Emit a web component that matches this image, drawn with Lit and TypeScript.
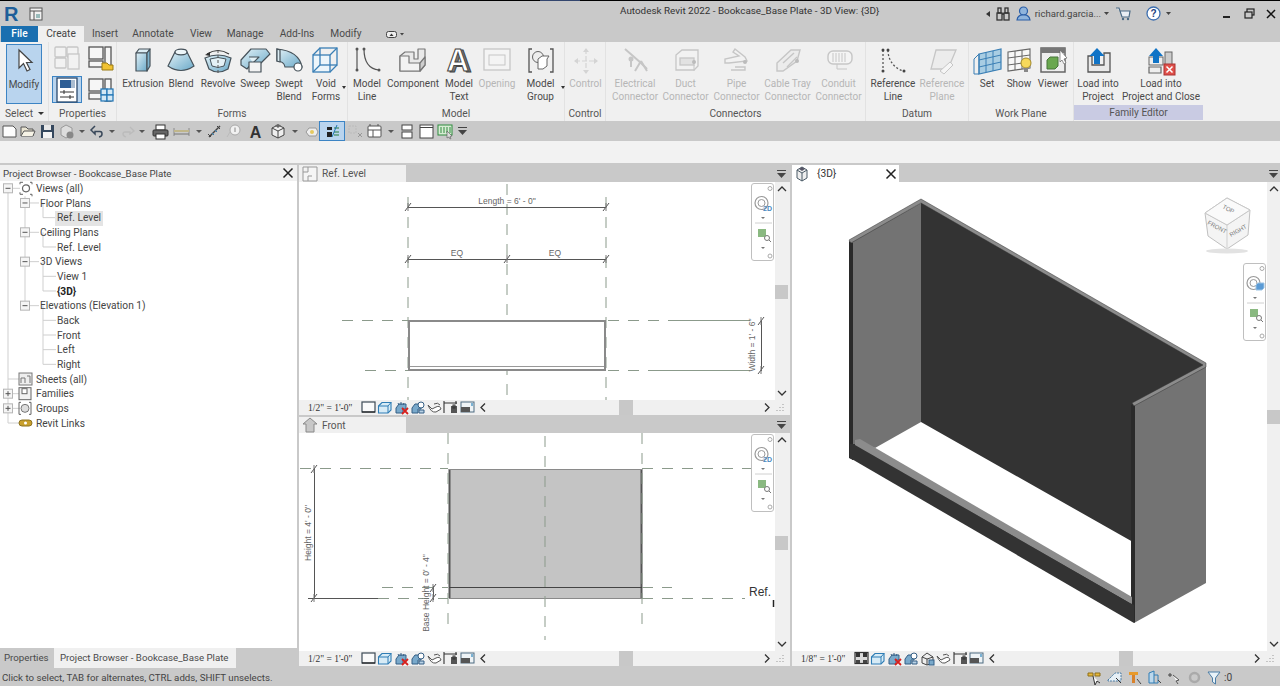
import { LitElement, html, svg, css } from "lit";
import { customElement } from "lit/decorators.js";

const SL = "#46525a";
const BL = "#3a7fb5";
const G = "#c6c6c6";
const ic = (f: unknown, w = 32, h = 29) => html`<svg class="ic" viewBox="0 0 ${w} ${h}" width=${w} height=${h}>${f}</svg>`;

const I: Record<string, unknown> = {
  extrusion: svg`<g stroke=${SL} stroke-width="1.2" stroke-linejoin="round"><path d="M9 6l3-4h11l-3 4z" fill="#dcedf4"/><rect x="9" y="6" width="11" height="18" fill="url(#bl)"/><path d="M20 6l3-4v17l-3 5z" fill="#7fb3cd"/></g>`,
  blend: svg`<g stroke=${SL} stroke-width="1.2"><path d="M10 5L3 19Q16 28 29 19L22 5z" fill="url(#bl)"/><ellipse cx="16" cy="5" rx="6" ry="2.8" fill="#eef6f9"/></g>`,
  revolve: svg`<path d="M5 7Q16 0 27 7" fill="none" stroke="#333" stroke-width="1.2"/><path d="M3 8l5-3v4z" fill="#333"/><path d="M3 11Q16 5 29 11L26 22Q16 28 7 22z" fill="url(#bl)" stroke=${SL} stroke-width="1.2"/><path d="M8 12Q16 9 24 12L22 19Q16 22 10 19z" fill="#e4f1f6" stroke=${SL}/><path d="M16 3V27" stroke="#555" stroke-dasharray="3 2"/>`,
  sweep: svg`<g stroke=${SL} stroke-width="1.2" stroke-linejoin="round"><path d="M2 13L12 2H27L31 7L22 16H13L8 22L2 18z" fill="url(#bl)"/><path d="M10 10H20L14 16" fill="#e4f1f6"/><rect x="10" y="15" width="12" height="10" fill="#f3f3f3"/></g>`,
  swept: svg`<g stroke=${SL} stroke-width="1.2"><path d="M4 2Q26 4 29 20L12 20Q11 14 4 14z" fill="url(#bl)"/><path d="M4 2V14L7 15V3z" fill="#dcedf4"/><circle cx="25" cy="20" r="4" fill="#fff"/></g>`,
  void: svg`<g fill="none" stroke=${BL} stroke-width="1.3"><rect x="3" y="8" width="17" height="17" fill="#edf6fb"/><rect x="10" y="1" width="17" height="17"/><path d="M3 8l7-7M20 8l7-7M20 25l7-7M3 25l7-7"/></g>`,
  mline: svg`<g fill="none" stroke="#555" stroke-width="1.2"><path d="M6 2V23M13 2C13 14 18 22 28 23"/></g><g fill="#555"><circle cx="6" cy="2" r="1.5"/><circle cx="6" cy="23" r="1.5"/><circle cx="13" cy="2" r="1.5"/><circle cx="28" cy="23" r="1.5"/></g>`,
  component: svg`<g stroke="#777" stroke-width="1.2" stroke-linejoin="round"><path d="M3 9L8 5H17V12H21V2H28V18L23 24H3z" fill="#e9e9e9"/><path d="M3 9H12V16H23V24H3z" fill="#f3f3f3"/><path d="M23 16L28 10V18L23 24z" fill="#cfcfcf"/></g>`,
  mtext: svg`<text x="17.500" y="25" font-size="31" font-weight="700" font-family="Liberation Sans" text-anchor="middle" fill="#777" stroke="#444">A</text><text x="15" y="24" font-size="31" font-weight="700" font-family="Liberation Sans" text-anchor="middle" fill="#fff" stroke="#444">A</text>`,
  opening: svg`<rect x="3" y="2" width="26" height="21" fill="#f4f4f4" stroke=${G} stroke-width="1.3"/><rect x="8" y="8" width="16" height="10" fill="none" stroke=${G}/>`,
  mgroup: svg`<path d="M7 2H4V25H7M25 2H28V25H25" fill="none" stroke="#555" stroke-width="1.3"/><circle cx="13" cy="10" r="5.5" fill="#eee" stroke="#666"/><path d="M13 12l4-3h7l-2 3v7l-4 3h-5z" fill="#fff" stroke="#666"/>`,
  control: svg`<path d="M16 2V26M5 14H27" stroke="#d4d4d4" stroke-dasharray="5 2" stroke-width="1.2"/><path d="M16 1l-3 4h6zM16 27l-3-4h6zM4 14l4-3v6zM28 14l-4-3v6z" fill="#d4d4d4"/>`,
  elec: svg`<g stroke=${G} stroke-width="2" fill="none"><path d="M6 2L22 16L28 22"/><path d="M22 14L16 24M22 14L28 24M12 12V20"/></g><circle cx="12" cy="12" r="2.5" fill=${G}/>`,
  duct: svg`<g stroke=${G} stroke-width="1.3" fill="#f2f2f2"><path d="M6 8L12 3H28V19L24 23H6z"/><rect x="10" y="11" width="14" height="7" fill="#e2e2e2"/></g><path d="M24 18v6" stroke=${G}/><circle cx="24" cy="15" r="2" fill="#bbb"/>`,
  pipe: svg`<g stroke=${G} stroke-width="1.4" fill="#f2f2f2"><path d="M14 2L24 10L26 14L8 16H4V12L18 9L12 5z"/><path d="M14 20H24V23H10"/></g><circle cx="24" cy="15" r="2" fill="#bbb"/>`,
  tray: svg`<g stroke=${G} stroke-width="1.4" fill="#ececec"><path d="M5 16L19 3H28L25 14L11 24H5z"/><path d="M11 16L22 6M15 20L25 10"/></g><circle cx="25" cy="14" r="2" fill="#bbb"/>`,
  conduit: svg`<rect x="5" y="4" width="24" height="13" rx="5" fill="#f4f4f4" stroke=${G} stroke-width="1.4"/><path d="M10 6v9M13 6v9M16 6v9M19 6v9M22 6v9" stroke=${G}/><path d="M14 17v5h10" stroke=${G} fill="none"/>`,
  refline: svg`<g fill="none" stroke="#555" stroke-width="1.3" stroke-dasharray="2 2"><path d="M6 3V24M11 3C11 14 18 22 27 24"/></g><g fill="#444"><circle cx="6" cy="3" r="1.5"/><circle cx="6" cy="24" r="1.5"/><circle cx="11" cy="3" r="1.5"/><circle cx="27" cy="24" r="1.5"/></g>`,
  refplane: svg`<path d="M10 3H30L22 22H5z" fill="#ececec" stroke=${G} stroke-width="1.3"/><path d="M14 24L24 15L27 18L18 27z" fill="#f5f5f5" stroke=${G}/>`,
  set: svg`<path d="M8 7L30 2V22L8 27z" fill="#a8cde3" stroke=${BL} stroke-width="1.2"/><path d="M3 12L8 7V27L3 27zM15 5V25M22 4V24M8 13L30 8M8 20L30 15" fill="none" stroke=${BL}/>`,
  show: svg`<path d="M5 5L27 2V21L5 24z" fill="#f7f7f7" stroke="#666" stroke-width="1.1"/><path d="M12 4V23M19 3V22M5 11L27 8M5 18L27 15" stroke="#666" fill="none"/><circle cx="23" cy="16" r="5" fill="#f6d95c" stroke="#a58c2b"/><rect x="21" y="21" width="4" height="4" fill="#888"/>`,
  viewer: svg`<rect x="4" y="1" width="24" height="24" fill="#eee" stroke="#666" stroke-width="1.5"/><rect x="4" y="1" width="24" height="5" fill="#777"/><path d="M10 13l3-3h8v9l-3 3H10z" fill="#6aa84f" stroke="#47753a"/><path d="M23 3l7 8-3 1 2 4-2 1-2-4-2 2z" fill="#fff" stroke="#666" stroke-width=".7"/>`,
  load: svg`<path d="M6 9H10V18H22V6H28V25H6z" fill="#e9e9e9" stroke="#555" stroke-width="1.3"/><path d="M15 1L7.500 9H12V17H18V9H22.500z" fill="#0f73c6"/>`,
  loadclose: svg`<path d="M4 20H16V26H4z" fill="#eee" stroke="#666" stroke-width="1.2"/><rect x="20" y="5" width="7" height="15" fill="#ccc" stroke="#666"/><rect x="4" y="10" width="14" height="8" fill="#eee" stroke="#666"/><path d="M11 1L4 9H8V16H14V9H18z" fill="#0f73c6"/><rect x="19" y="17" width="11" height="11" fill="#e0504a" stroke="#a33"/><path d="M21.500 19.500l6 6m0-6l-6 6" stroke="#fff" stroke-width="1.500"/>`,
  cursor: svg`<path d="M4 2V20L8.500 15.500L12 23L15 21.500L11.500 14.500H17z" fill="#fff" stroke="#444" stroke-width="1.200"/>`,
  pfam: svg`<g fill="#f2f2f2" stroke=${G} stroke-width="1.300"><rect x="1" y="2" width="11" height="10" rx="1"/><rect x="13" y="2" width="11" height="10" rx="1"/><rect x="1" y="13" width="11" height="10" rx="1"/><rect x="14" y="9" width="11" height="15"/></g>`,
  ptype: svg`<g fill="#f6f6f6" stroke="#555" stroke-width="1.300"><rect x="1" y="2" width="14" height="12"/><rect x="17" y="2" width="6" height="22"/><rect x="1" y="16" width="14" height="6"/></g><path d="M14 18h5l2 2h4v5H14z" fill="#f1c232" stroke="#9a7a12"/>`,
  pact: svg`<rect x="2" y="1" width="20" height="24" fill="#fff" stroke="#2c4a6e" stroke-width="1.300"/><rect x="5" y="3" width="11" height="8" fill="#2f5f96"/><rect x="16" y="3" width="4" height="8" fill="#aabdd1"/><path d="M5 15H19M5 20H19" stroke="#333"/><path d="M9 13v4M15 18v4" stroke="#333"/>`,
  pgrid: svg`<g fill="#f6f6f6" stroke="#555" stroke-width="1.300"><rect x="1" y="2" width="14" height="12"/><rect x="17" y="2" width="6" height="22"/><rect x="1" y="16" width="14" height="6"/></g><g fill="#d3e8f5" stroke="#1f74b5" stroke-width="1.200"><rect x="13" y="12" width="6" height="6"/><rect x="19" y="12" width="6" height="6"/><rect x="13" y="18" width="6" height="6"/><rect x="19" y="18" width="6" height="6"/></g>`,
};

const drop = svg`<path d="M5 7h6l-3 3z" fill="#555"/>`;
const Q: [number, unknown][] = [
  [14, svg`<path d="M2 3H12L15 6V14H2z" fill="#fdfdfd" stroke="#555"/>`],
  [32, svg`<path d="M2 4H7L9 6H14V13H2z" fill="#e9e4d2" stroke="#555"/><path d="M2 13L5 8H16L14 13" fill="#f6f3e6" stroke="#555"/>`],
  [52, svg`<rect x="2" y="2" width="13" height="13" fill="#35485e"/><rect x="5" y="2" width="7" height="5" fill="#e8e8e8"/><rect x="4" y="9" width="9" height="6" fill="#f4f4f4"/>`],
  [72, svg`<path d="M3 5L8 2L14 5V12L8 15L3 12z" fill="#ddd" stroke="#999"/><circle cx="12" cy="12" r="3.500" fill="#888"/>`],
  [88, drop],
  [103, svg`<path d="M6 3L2 7L6 11V8.500H11Q13 8.500 13 11T10 14" fill="none" stroke="#39485a" stroke-width="1.500"/>`],
  [117, drop],
  [133, svg`<path d="M11 4L15 8L11 11V9H6Q4 9 4 11T7 14" fill="none" stroke="#bbb" stroke-width="1.300"/>`],
  [147, drop],
  [163, svg`<rect x="4" y="2" width="9" height="5" fill="#fff" stroke="#333"/><rect x="1" y="7" width="15" height="6" rx="1" fill="#666" stroke="#333"/><rect x="4" y="11" width="9" height="5" fill="#fff" stroke="#333"/>`],
  [189, svg`<path d="M1 5V13M16 5V13" stroke="#8a8a8a"/><rect x="1" y="7" width="15" height="2" fill="#c0b68a"/><path d="M1 11H16" stroke="#777"/>`],
  [204, drop],
  [219, svg`<path d="M3 14L14 3" stroke="#444" stroke-width="1.400"/><path d="M2 11l3 3M11 3l3 3" stroke="#444"/><path d="M6 10l2 2M9 7l2 2" stroke="#2f7db5"/>`],
  [237, svg`<path d="M2 14L5 9" stroke="#bbb"/><circle cx="10" cy="7" r="5" fill="#f1f1f1" stroke="#aaa"/><path d="M10 4.500V9" stroke="#888"/>`],
  [259, svg`<text x="8.500" y="15" font-size="16" font-weight="700" font-family="Liberation Sans" text-anchor="middle" fill="#333">A</text>`],
  [285, svg`<path d="M3 5L9 2L15 5V12L9 15L3 12z" fill="#eee" stroke="#444"/><path d="M3 5L9 8L15 5M9 8V15" fill="none" stroke="#444"/><path d="M6 2.500L9 1L12 2.500L9 5z" fill="#666"/>`],
  [302, drop],
  [314, svg`<path d="M3 9L6 5H13L15 9L13 13H6z" fill="#eee" stroke="#999"/><circle cx="9" cy="9" r="2" fill="#e6c95f"/>`],
  [336, svg`<path d="M3 4H8V7H3zM3 9H8V14H3z" fill="#222"/><path d="M10 5H15M10 9H15M10 12H15" stroke="#267a3a"/><path d="M8 14L13 2" stroke="#1f74b5"/>`],
  [362, svg`<g fill="none" stroke="#bbb"><rect x="2" y="3" width="7" height="7" stroke-dasharray="2 1"/></g><path d="M11 10l4 4m0-4l-4 4" stroke="#999"/>`],
  [383, svg`<rect x="1" y="3" width="13" height="11" rx="1" fill="#fff" stroke="#555"/><path d="M1 7H14M6 7V14" stroke="#555"/><path d="M3 1V3M11 1V3" stroke="#555"/>`],
  [395, drop],
  [411, svg`<rect x="3" y="2" width="10" height="5" fill="#fff" stroke="#444"/><rect x="3" y="9" width="10" height="6" fill="#fff" stroke="#444"/>`],
  [431, svg`<rect x="2" y="2" width="13" height="13" fill="#fff" stroke="#444"/><path d="M2 4.500H15" stroke="#444"/>`],
  [451, svg`<rect x="1" y="2" width="14" height="10" fill="#d8ecd4" stroke="#2e8b3f"/><path d="M4 4v6M7 4v6M10 4v6M13 4v6" stroke="#2e8b3f"/><path d="M10 8l5 5-2 .5 1 2-1 .5-1-2-2 1z" fill="#ddd" stroke="#555" stroke-width=".600"/>`],
  [467, svg`<path d="M4 4.500h9" stroke="#444"/><path d="M4 7h9l-4.500 5z" fill="#444"/>`],
];

const V = {
  paper: svg`<rect x="1" y="2" width="13" height="10" fill="#fafafa" stroke="#3c4a55" stroke-width="1.200"/><path d="M1 12H14" stroke="#111"/>`,
  hatch: svg`<rect x="1" y="1.500" width="13" height="11" fill="#d9d9d9" stroke="#333" stroke-width="1.200"/><rect x="2" y="2" width="4" height="4" fill="#333"/><rect x="9" y="2" width="4" height="4" fill="#333"/><rect x="2" y="9" width="4" height="3" fill="#444"/><rect x="9" y="9" width="4" height="3" fill="#444"/>`,
  cube: svg`<path d="M1.500 6L5 2.500H14V10L11 13H1.500z" fill="#d7ebf6" stroke="#2f7db5" stroke-width="1.100"/><path d="M1.500 6H11V13M11 6L14 2.500" fill="none" stroke="#2f7db5"/>`,
  sun: svg`<path d="M2 8L5 4H12V9H9V13H2z" fill="#79a9cb" stroke="#355f85"/><path d="M7 2V5M4 3l1 2M10 3l-1 2" stroke="#355f85"/><path d="M8 8l6 6m0-6l-6 6" stroke="#d6211e" stroke-width="1.800"/>`,
  shadow: svg`<path d="M2 8L5 4H11V9H8V13H2z" fill="#79a9cb" stroke="#355f85"/><circle cx="11" cy="5" r="3" fill="#fff" stroke="#355f85"/><path d="M9 10H14V13H9z" fill="#b9d2e6" stroke="#355f85"/>`,
  house: svg`<path d="M2 6L7 2L13 6V12L7 14L2 12z" fill="#eee" stroke="#444"/><path d="M2 6L7 8L13 6M7 8V14" fill="none" stroke="#444"/><rect x="9" y="9" width="5" height="5" fill="#79a9cb" stroke="#355f85"/>`,
  link: svg`<path d="M1 5L5 9L9 7Q13 5 14 9L9 12Q4 13 1 5" fill="#fff" stroke="#555"/><path d="M7 4Q11 2 13 5" fill="none" stroke="#555"/>`,
  crop: svg`<path d="M1 1V13M1 3H14M13 1V4" fill="none" stroke="#333" stroke-width="1.100"/><rect x="8" y="6" width="6" height="7" fill="#555"/><rect x="10" y="5" width="2" height="3" fill="none" stroke="#333"/>`,
  hide: svg`<rect x="1" y="2" width="13" height="10" fill="#eef3f6" stroke="#4d6a80"/><rect x="1" y="7" width="9" height="5" fill="#555"/><rect x="11" y="3" width="2" height="3" fill="#7ab2d4"/>`,
};

const chevL = svg`<path d="M6 1.500L2 5.500L6 9.500" fill="none" stroke="#333" stroke-width="1.300"/>`;
const chevR = svg`<path d="M2 1.500L6 5.500L2 9.500" fill="none" stroke="#333" stroke-width="1.300"/>`;
const chevU = svg`<path d="M1 6L5 2L9 6" fill="none" stroke="#333" stroke-width="1.300"/>`;
const chevD = svg`<path d="M1 2L5 6L9 2" fill="none" stroke="#333" stroke-width="1.300"/>`;
const menuIc = html`<svg class="ic" viewBox="0 0 12 10" width="12" height="10"><path d="M1 1.500h9" stroke="#444"/><path d="M1 4h9L5.500 9z" fill="#444"/></svg>`;
const closeIc = html`<svg class="ic" viewBox="0 0 12 12" width="12" height="12"><path d="M1.500 1.500l9 9m0-9l-9 9" stroke="#222" stroke-width="1.500"/></svg>`;

type P = { label: string; w: number; pad: number; hl?: boolean; tools: { w: number; t: string[]; i: string; off?: boolean; dd?: boolean }[] };
const PANELS: P[] = [
  { label: "Forms", w: 231, pad: 5, tools: [
    { w: 42, t: ["Extrusion"], i: "extrusion" }, { w: 34, t: ["Blend"], i: "blend" }, { w: 40, t: ["Revolve"], i: "revolve" },
    { w: 34, t: ["Sweep"], i: "sweep" }, { w: 34, t: ["Swept", "Blend"], i: "swept" }, { w: 40, t: ["Void", "Forms"], i: "void", dd: true } ] },
  { label: "Model", w: 217, pad: 0, tools: [
    { w: 38, t: ["Model", "Line"], i: "mline" }, { w: 54, t: ["Component"], i: "component" }, { w: 38, t: ["Model", "Text"], i: "mtext" },
    { w: 38, t: ["Opening"], i: "opening", off: true }, { w: 49, t: ["Model", "Group"], i: "mgroup", dd: true } ] },
  { label: "Control", w: 41, pad: 0, tools: [{ w: 41, t: ["Control"], i: "control", off: true }] },
  { label: "Connectors", w: 260, pad: 4, tools: [
    { w: 50, t: ["Electrical", "Connector"], i: "elec", off: true }, { w: 51, t: ["Duct", "Connector"], i: "duct", off: true },
    { w: 51, t: ["Pipe", "Connector"], i: "pipe", off: true }, { w: 51, t: ["Cable Tray", "Connector"], i: "tray", off: true },
    { w: 51, t: ["Conduit", "Connector"], i: "conduit", off: true } ] },
  { label: "Datum", w: 103, pad: 2, tools: [{ w: 50, t: ["Reference", "Line"], i: "refline" }, { w: 48, t: ["Reference", "Plane"], i: "refplane", off: true }] },
  { label: "Work Plane", w: 105, pad: 2, tools: [{ w: 32, t: ["Set"], i: "set" }, { w: 32, t: ["Show"], i: "show" }, { w: 36, t: ["Viewer"], i: "viewer" }] },
  { label: "Family Editor", w: 129, pad: 0, hl: true, tools: [{ w: 48, t: ["Load into", "Project"], i: "load" }, { w: 78, t: ["Load into", "Project and Close"], i: "loadclose" }] },
];

const TREE: [number, string][] = [
  [0, "Views (all)"], [1, "Floor Plans"], [2, "Ref. Level"], [1, "Ceiling Plans"], [2, "Ref. Level"], [1, "3D Views"], [2, "View 1"], [2, "{3D}"],
  [1, "Elevations (Elevation 1)"], [2, "Back"], [2, "Front"], [2, "Left"], [2, "Right"], [0, "Sheets (all)"], [0, "Families"], [0, "Groups"], [0, "Revit Links"],
];
const RH = 14.67;
const ry = (i: number) => 7.3 + i * RH;
const expander = (x: number, y: number, plus: boolean) => svg`<rect x=${x - 4.500} y=${y - 4.500} width="9" height="9" fill="#f5f5f5" stroke="#b5b5b5"/><path d="M${x - 2.500} ${y}H${x + 2.500}${plus ? `M${x} ${y - 2.500}V${y + 2.500}` : ""}" stroke="#555"/>`;
const treeSvg = () => {
  const c = "#cfcfcf";
  const lines = [`M8 ${ry(0)}V${ry(16)}`, `M25 ${ry(0) + 8}V${ry(8)}`, `M43 ${ry(1)}V${ry(2)}`, `M43 ${ry(3)}V${ry(4)}`, `M43 ${ry(5)}V${ry(7)}`, `M43 ${ry(8)}V${ry(12)}`];
  TREE.forEach(([l], i) => { const y = ry(i); lines.push(l === 2 ? `M43 ${y}H56` : l === 1 ? `M25 ${y}H39` : `M8 ${y}H20`); });
  return html`<svg class="over" width="297" height="260" viewBox="0 0 297 260">
    <path d=${lines.join("")} stroke=${c} fill="none"/>
    ${[[8, 0, false], [25, 1, false], [25, 3, false], [25, 5, false], [25, 8, false], [8, 14, true], [8, 15, true]].map(([x, i, p]) => expander(x as number, ry(i as number), p as boolean))}
    <g fill="none" stroke="#666"><path d="M20 ${ry(0) - 4}v-2h3M30 ${ry(0) - 6}h2v2M20 ${ry(0) + 4}v2h3M30 ${ry(0) + 6}h2v2"/><circle cx="26" cy=${ry(0)} r="3.500" stroke-width="1.200"/></g>
    <rect x="19" y=${ry(13) - 6} width="13" height="12" fill="#eee" stroke="#777"/><path d="M21 ${ry(13) + 4}v-5h4v5M27 ${ry(13) - 3}h3v7" fill="none" stroke="#777"/>
    <rect x="19" y=${ry(14) - 6} width="12" height="12" fill="#f1f1f1" stroke="#666"/><rect x="22" y=${ry(14) - 5} width="5" height="5" fill="#fff" stroke="#666"/>
    <path d="M21 ${ry(15) - 6}h-2v12h2M29 ${ry(15) - 6}h2v12h-2" fill="none" stroke="#666"/><circle cx="25" cy=${ry(15)} r="4" fill="#ddd" stroke="#777"/>
    <rect x="19" y=${ry(16) - 3} width="13" height="6" rx="3" fill="#c9a02c" stroke="#8d7322"/><circle cx="25.500" cy=${ry(16)} r="1.500" fill="#fff"/>
  </svg>`;
};

const navBar = (cls: string, three: boolean) => html`<div class="nav ${cls}"><svg class="ic" viewBox="0 0 22 76" width="22" height="76">
  <g fill="none" stroke="#aaa"><circle cx="18" cy="4.500" r="2"/><circle cx="18" cy="72" r="2"/></g>
  <circle cx="9.500" cy="19" r="6.500" fill="#fff" stroke="#999" stroke-width="1.200"/><circle cx="9.500" cy="19" r="3.500" fill="none" stroke="#999"/>
  ${three ? svg`<path d="M12 21l2-2h6v5l-2 2h-6z" fill="#5b9bd5" stroke="#9cc3e4"/>` : svg`<text x="15.500" y="27" font-size="7" font-weight="700" fill="#4a8ac0" font-family="Liberation Sans" text-anchor="middle">2D</text>`}
  <path d="M9 33h4l-2 2z" fill="#777"/><path d="M3 39H20" stroke="#d0d0d0"/>
  <rect x="6" y="45" width="8" height="8" fill="#8ab981"/><circle cx="15" cy="54" r="2.500" fill="#fff" stroke="#777"/><path d="M17 56l2 2" stroke="#777"/>
  <path d="M9 63h4l-2 2z" fill="#777"/>
</svg></div>`;

const viewStatus = (scale: string, icons: unknown[], thumb: number) => html`<div class="vstat">
  <div class="scale">${scale}</div>
  <div class="vicons">${icons.map((f) => html`<span class="vi">${ic(f, 15, 15)}</span>`)}</div>
  <span class="chev">${ic(chevL, 8, 11)}</span>
  <div class="htrack"><div class="hthumb" style="margin-left:${thumb}px"></div></div>
  <span class="chev">${ic(chevR, 8, 11)}</span>
  <span class="grip">${ic(svg`<path d="M9 2v1M9 5v1M6 5v1M9 8v1M6 8v1M3 8v1" stroke="#999"/>`, 11, 11)}</span>
</div>`;

const vscroll = (top: number) => html`<div class="vs">
  <span class="vsa">${ic(chevU, 10, 8)}</span>
  <div class="vtrack"><div class="vthumb" style="margin-top:${top}px"></div></div>
  <span class="vsa">${ic(chevD, 10, 8)}</span>
</div>`;

const DASH = "#8b9a8b";
const dimText = (x: number, y: number, t: string, rot = false) => svg`<text x=${x} y=${y} class="dim" text-anchor="middle" transform=${rot ? `rotate(-90 ${x} ${y})` : ""}>${t}</text>`;
const tick = (x: number, y: number) => svg`<path d="M${x - 3} ${y + 4}L${x + 3} ${y - 4}" stroke="#555"/><path d="M${x} ${y - 4}V${y + 4}" stroke="#777"/>`;

const planSvg = html`<svg class="draw" viewBox="299 182 476 218" width="476" height="218">
  <g stroke=${DASH} fill="none" stroke-dasharray="11 9">
    <path d="M408 197V400M507 184V400M606 197V400"/>
    <path d="M342 320.500H408M365 370.500H408M608 320.500H677M608 370.500H650"/>
  </g>
  <path d="M677 320.500H750M650 370.500H750" stroke=${DASH}/>
  <path d="M408 207.500H606M408 259.500H606" stroke="#555"/>
  ${tick(408, 207)}${tick(606, 207)}${tick(408, 259)}${tick(507, 259)}${tick(606, 259)}
  ${dimText(507, 204, `Length = 6' - 0"`)}${dimText(457, 256, "EQ")}${dimText(555, 256, "EQ")}
  <rect x="409" y="321" width="196" height="49" fill="#fff" stroke="#8a8a8a" stroke-width="2"/>
  <path d="M410 366.500H604" stroke="#999"/>
  <path d="M761.500 320V371" stroke="#555"/>${tick(761, 321)}${tick(761, 370)}
  ${dimText(755, 345, `Width = 1' - 6"`, true)}
</svg>`;

const elevSvg = html`<svg class="draw" viewBox="299 433 476 218" width="476" height="218">
  <rect x="449" y="469" width="193" height="129" fill="#c4c4c4"/>
  <path d="M449.500 469V598M641.500 469V598" stroke="#555" stroke-width="2"/>
  <path d="M449 469.500H642M449 598.500H642" stroke="#8a8a8a"/>
  <path d="M449 587.500H642" stroke="#444"/>
  <g stroke=${DASH} fill="none" stroke-dasharray="11 9">
    <path d="M448 433V632M545 436V640M642 433V632"/>
    <path d="M300 468.500H448M642 468.500H775M382 587.500H448M642 587.500H672"/>
    <path d="M378 598.500H448M642 598.500H745" />
  </g>
  <path d="M314.500 468V599M308 598.500H378" stroke="#555"/>${tick(314, 469)}${tick(314, 598)}
  ${dimText(311, 533, `Height = 4' - 0"`, true)}
  ${dimText(429, 593, `Base Height = 0' - 4"`, true)}
  <path d="M433.500 586V600" stroke="#555"/>${tick(433, 588)}${tick(433, 598)}
  <text x="749" y="596" class="ref">Ref.</text>
  <path d="M773.500 600v7" stroke="#222" stroke-width="1.500"/>
</svg>`;

const modelSvg = html`<svg class="draw" viewBox="792 182 475 468" width="475" height="468">
  <path d="M921 202L1206 365L1133 404V542L921 422z" fill="#333"/>
  <path d="M852 241L921 203V422L875 448L855 440V460H852z" fill="#737373"/>
  <path d="M849 241V458L853 460V243z" fill="#2a2a2a"/>
  <path d="M1133 403L1206 364V583L1134 623z" fill="#737373"/>
  <path d="M1131 405L1135 403V623L1131 620z" fill="#2a2a2a"/>
  <path d="M849 240L921 199L1206 363L1206 367L1134 406L1132 403L1203 365L921 203L851 243z" fill="#8c8c8c" stroke="#333" stroke-width=".5"/>
  <path d="M850 444L855 444L1131 603L1134 605V623L850 458z" fill="#333"/>
  <path d="M855 440L860 439L1132 597V604L855 445z" fill="#8c8c8c"/>
  <path d="M1205 213L1227 198L1250 210L1248 235L1227 249L1208 236z" fill="#f4f4f4" stroke="#c0c0c0"/>
  <path d="M1205 213L1227 225L1250 210M1227 225V249" fill="none" stroke="#cfcfcf"/>
  <path d="M1205 213L1227 198L1250 210L1227 225z" fill="#fafafa" stroke="#c8c8c8"/>
  <ellipse cx="1227" cy="251" rx="21" ry="2.500" fill="#e2e2e2"/>
  <text class="cube" transform="translate(1222 208) rotate(28)">TOP</text>
  <text class="cube" transform="translate(1207 224) rotate(28)">FRONT</text>
  <text class="cube" transform="translate(1231 237) rotate(-30)">RIGHT</text>
</svg>`;

@customElement("app-root")
export class AppRoot extends LitElement {
  static styles = css`
    :host { display: flex; flex-direction: column; width: 1280px; height: 686px; overflow: hidden; background: #c9c9c9; font: 10.2px Roboto, "Liberation Sans", sans-serif; color: #4a4a4a; position: relative; }
    svg { display: block; }
    .ic { overflow: visible; }
    .defs { position: absolute; width: 0; height: 0; }
    .topline { height: 1px; background: #000; flex: none; }
    .topline div { width: 40px; height: 1px; margin-left: 540px; background: #33466e; }
    .title { height: 25px; flex: none; display: flex; align-items: center; position: relative; }
    .logo { width: 22px; padding-left: 4px; font: 700 20px "Liberation Sans", sans-serif; color: #1f5f99; line-height: 22px; }
    .appmenu { margin-left: 3px; }
    .caption { position: absolute; left: 620px; top: 2px; white-space: nowrap; font-size: 9.9px; line-height: 15px; color: #333; }
    .spacer { flex: 1; }
    .user { display: flex; align-items: center; height: 22px; margin-right: 4px; position: relative; font-size: 9.6px; color: #444; }
    .tabs { height: 16px; flex: none; display: flex; align-items: stretch; line-height: 16px; }
    .tab { text-align: center; }
    .tab.file { background: #1a6fb0; color: #fff; font-weight: 500; margin-left: 1px; }
    .tab.cur { background: #f0f0f0; color: #444; }
    .ribbon { height: 79px; flex: none; display: flex; background: #f0f0f0; }
    .panel { box-sizing: border-box; height: 79px; display: flex; flex-direction: column; border-right: 1px solid #e2e2e2; flex: none; }
    .ptools { height: 63px; display: flex; flex: none; box-sizing: border-box; }
    .plabel { height: 16px; line-height: 17px; text-align: center; color: #555; }
    .plabel.hl { background: #c9cbe3; margin-bottom: 1px; height: 15px; line-height: 16px; }
    .tool { flex: none; display: flex; flex-direction: column; align-items: center; padding-top: 5px; box-sizing: border-box; position: relative; line-height: 13px; white-space: nowrap; color: #4a4a4a; font-size: 10px; }
    .tool.off { color: #b6b6b6; }
    .tool .ic { height: 29px; flex: none; margin-bottom: 1px; }
    .dd { position: absolute; right: 0; top: 44px; width: 0; height: 0; border: 2px solid transparent; border-top: 3px solid #333; border-bottom: 0; }
    .modify { box-sizing: border-box; margin: 2px 0 0 6px; width: 36px; height: 60px; background: #b9d4ee; border: 1px solid #3c84c4; display: flex; flex-direction: column; align-items: center; padding-top: 3px; font-size: 10px; }
    .modify span { margin-top: 6px; line-height: 13px; }
    .sel { text-align: left; padding-left: 5px; display: flex; align-items: center; gap: 5px; line-height: 16px; padding-top: 1px; height: 15px; }
    .sel i { width: 0; height: 0; border: 3px solid transparent; border-top: 3px solid #333; border-bottom: 0; }
    .pgrid { display: grid; grid-template-columns: 35px 33px; grid-template-rows: 32px 31px; justify-items: center; align-items: center; }
    .pact { width: 30px; height: 27px; background: #b9d4ee; border: 1px solid #3c84c4; display: flex; align-items: center; justify-content: center; box-sizing: border-box; }
    .qat { height: 20px; flex: none; display: flex; align-items: center; position: relative; }
    .qi { display: flex; justify-content: center; flex: none; }
    .qi.on { background: #b9d4ee; outline: 1px solid #3c84c4; height: 18px; align-items: center; }
    .opts { height: 22px; flex: none; background: #f2f2f2; }
    .gapline { height: 2px; flex: none; background: #c9c9c9; }
    .main { flex: 1; display: grid; grid-template-columns: 299px 491px 490px; min-height: 0; height: 504px; }
    .browser { display: flex; flex-direction: column; width: 297px; }
    .bhead { height: 16px; flex: none; background: #f0f0f0; display: flex; align-items: center; justify-content: space-between; padding: 0 3px; color: #444; white-space: nowrap; font-size: 9.7px; }
    .tree { flex: 1; background: #fff; position: relative; color: #444; padding-top: 1px; }
    .over { position: absolute; left: 0; top: 0; }
    .row { height: 14.67px; line-height: 14.67px; position: relative; white-space: nowrap; }
    .row span { padding: 0 1px; display: inline-block; }
    .row.hi span { background: #e4e4e4; padding: 0 2px; margin-left: -1px; }
    .row.b { font-weight: 700; color: #222; }
    .l0 { padding-left: 35px; } .l1 { padding-left: 39px; } .l2 { padding-left: 56px; }
    .btabs { height: 20px; flex: none; display: flex; margin-bottom: 1px; line-height: 20px; white-space: nowrap; font-size: 9.7px; }
    .btabs div { padding: 0 4px; width: 54px; box-sizing: border-box; flex: none; }
    .btabs .on { background: #f0f0f0; width: 182px; padding-left: 6px; }
    .cen { display: grid; grid-template-rows: 250px 249px; row-gap: 2px; align-content: start; width: 491px; }
    .pane { display: grid; grid-template-rows: auto 1fr 15px; min-height: 0; }
    .vhead { height: 17px; background: #c9c9c9; display: flex; align-items: center; }
    .vhead.short { height: 16px; }
    .vtab { width: 107px; height: 100%; background: #f0f0f0; display: flex; align-items: center; box-sizing: border-box; padding-left: 3px; gap: 4px; color: #555; }
    .vtab.act { background: #fff; color: #333; justify-content: space-between; padding-right: 2px; }
    .vtab.act b { font-weight: 400; flex: 1; }
    .vmenu { margin-left: auto; margin-right: 2px; }
    .vbody { display: flex; min-height: 0; }
    .canvas { flex: 1; background: #fff; position: relative; overflow: hidden; }
    .draw { position: absolute; left: 0; top: 0; }
    .dim { font: 8.5px "Liberation Sans", sans-serif; fill: #666; }
    .ref { font: 12px "Liberation Sans", sans-serif; fill: #333; }
    .cube { font: 6px "Liberation Sans", sans-serif; fill: #777; }
    .nav { position: absolute; box-sizing: border-box; width: 23px; height: 78px; background: #fff; border: 1px solid #bfbfbf; border-radius: 3px; }
    .nav.a { right: 1px; top: 1px; }
    .nav.b { right: 1px; top: 81px; }
    .vs { width: 15px; flex: none; background: #f0f0f0; display: flex; flex-direction: column; }
    .vsa { height: 14px; display: flex; align-items: center; justify-content: center; padding-right: 2px; flex: none; }
    .vtrack { flex: 1; }
    .vthumb { height: 14px; background: #c8c8c8; margin-right: 2px; }
    .vstat { display: flex; align-items: center; background: #f0f0f0; height: 15px; }
    .scale { width: 61px; flex: none; box-sizing: border-box; padding-left: 9px; font: 9.5px "Liberation Serif", serif; color: #333; }
    .vicons { display: flex; flex: none; }
    .vi { width: 16.5px; display: flex; justify-content: center; }
    .chev { width: 14px; flex: none; display: flex; justify-content: center; }
    .htrack { flex: 1; height: 100%; }
    .hthumb { width: 14px; height: 100%; background: #c8c8c8; }
    .grip { width: 16px; flex: none; }
    .right { width: 490px; padding-left: 2px; box-sizing: border-box; }
    .right .pane { grid-template-rows: 17px 469px 15px; height: 501px; }
    .right .vs { width: 13px; }
    .right .vthumb, .right .vsa { margin-right: 0; padding-right: 0; }
    .status { height: 17px; flex: none; display: flex; align-items: center; padding-left: 2px; color: #444; position: relative; font-size: 9.7px; }
    .sicons { margin-left: auto; display: flex; align-items: center; margin-right: 56px; }
    .si { width: 20px; display: flex; justify-content: center; }
    .z { margin-left: 0; width: 0; font-size: 10.2px; }
  `;

  private qat() {
    let prev = 5;
    return Q.map(([cx, f], i) => {
      const next = i + 1 < Q.length ? (Q[i + 1][0] as number) : cx + 17;
      const left = prev;
      const right = (cx + next) / 2;
      prev = right;
      const on = cx === 336;
      return html`<div class="qi ${on ? "on" : ""}" style="width:${right - left}px">${ic(f, 17, 17)}</div>`;
    });
  }

  render() {
    const tabs: [string, number, string?][] = [["File", 37, "file"], ["Create", 46, "cur"], ["Insert", 42], ["Annotate", 54], ["View", 42], ["Manage", 46], ["Add-Ins", 58], ["Modify", 40]];
    return html`
      <svg class="defs"><defs><linearGradient id="bl" x1="0" y1="0" x2="1" y2="1"><stop offset="0" stop-color="#e2f1f7"/><stop offset="1" stop-color="#6aa9c8"/></linearGradient></defs></svg>
      <div class="topline"><div></div></div>
      <div class="title">
        <div class="logo">R</div>
        <div class="appmenu">${ic(svg`<rect x="1" y="1" width="12" height="12" fill="#f1f1f1" stroke="#555"/><path d="M1 4H13M5 4V13" stroke="#555"/><rect x="7" y="7" width="4" height="4" fill="#9bb"/>`, 14, 14)}</div>
        <div class="caption">Autodesk Revit 2022 - Bookcase_Base Plate - 3D View: {3D}</div>
        <div class="spacer"></div>
        <div class="user">
          ${ic(svg`<path d="M5 1L1 4L5 7z" fill="#333"/>`, 6, 8)}
          <span style="width:5px"></span>
          ${ic(svg`<g fill="none" stroke="#333" stroke-width="1.300"><rect x="2" y="1" width="3" height="5"/><rect x="9" y="1" width="3" height="5"/><rect x="1" y="6" width="5" height="7"/><rect x="8" y="6" width="5" height="7"/><path d="M6 7H8"/></g>`, 14, 14)}
          <span style="width:6px"></span>
          ${ic(svg`<circle cx="7.500" cy="5" r="4" fill="#8fb4dc" stroke="#2a5ea8" stroke-width="1.200"/><path d="M1 14Q2 8.500 7.500 9Q13 8.500 14 14z" fill="#8fb4dc" stroke="#2a5ea8" stroke-width="1.200"/>`, 15, 15)}
          <span style="width:4px"></span>
          <span>richard.garcia...</span>
          <span style="width:3px"></span>
          ${ic(svg`<path d="M0 0h5l-2.500 3z" fill="#444"/>`, 5, 4)}
          <span style="width:6px"></span>
          ${ic(svg`<path d="M1 2H4L7 11H14L15 5H5" fill="#e8eef4" stroke="#4a6a85" stroke-width="1.200"/><circle cx="8" cy="13" r="1.200" fill="#4a6a85"/><circle cx="13" cy="13" r="1.200" fill="#4a6a85"/>`, 16, 15)}
          <span style="width:15px"></span>
          <svg class="ic" viewBox="0 0 15 15" width="15" height="15"><circle cx="7.500" cy="7.500" r="6.500" fill="#fff" stroke="#3d6fb0" stroke-width="1.300"/><text x="7.500" y="11" font-size="10" font-weight="700" font-family="Liberation Sans" text-anchor="middle" fill="#1d3f80">?</text></svg>
          <span style="width:5px"></span>
          ${ic(svg`<path d="M0 0h5l-2.500 3z" fill="#444"/>`, 5, 4)}
          <span style="width:52px"></span>
          ${ic(svg`<path d="M0 9H7" stroke="#222" stroke-width="2"/>`, 8, 11)}
          <span style="width:13px"></span>
          ${ic(svg`<rect x="3" y="1" width="7" height="6" fill="none" stroke="#222" stroke-width="1.200"/><rect x="1" y="4" width="7" height="6" fill="#c9c9c9" stroke="#222" stroke-width="1.200"/>`, 11, 11)}
          <span style="width:11px"></span>
          ${ic(svg`<path d="M1 1l8 8m0-8l-8 8" stroke="#111" stroke-width="1.500"/>`, 10, 10)}
        </div>
      </div>
      <div class="tabs">
        ${tabs.map(([t, w, c]) => html`<div class="tab ${c ?? ""}" style="width:${w}px">${t}</div>`)}
        <div style="margin-left:20px;display:flex;align-items:center;gap:3px">${ic(svg`<rect x=".5" y="1.500" width="10" height="6" rx="2" fill="#eee" stroke="#444"/><path d="M3.500 6l2-2.500 2 2.500z" fill="#333"/>`, 11, 9)}${ic(svg`<path d="M0 0h4l-2 2.500z" fill="#444"/>`, 4, 3)}</div>
      </div>
      <div class="ribbon">
        <div class="panel" style="width:49px">
          <div class="ptools"><div class="modify">${ic(I.cursor, 18, 24)}<span>Modify</span></div></div>
          <div class="plabel sel">Select <i></i></div>
        </div>
        <div class="panel" style="width:68px">
          <div class="ptools pgrid">
            <div>${ic(I.pfam, 26, 26)}</div><div>${ic(I.ptype, 26, 26)}</div>
            <div class="pact">${ic(I.pact, 24, 26)}</div><div>${ic(I.pgrid, 26, 26)}</div>
          </div>
          <div class="plabel">Properties</div>
        </div>
        ${PANELS.map((p) => html`<div class="panel" style="width:${p.w}px;${p.hl ? "border-right:0" : ""}">
          <div class="ptools" style="padding-left:${p.pad}px">
            ${p.tools.map((t) => html`<div class="tool ${t.off ? "off" : ""}" style="width:${t.w}px">${ic(I[t.i])}${t.t.map((l) => html`<div>${l}</div>`)}${t.dd ? html`<i class="dd"></i>` : ""}</div>`)}
          </div>
          <div class="plabel ${p.hl ? "hl" : ""}">${p.label}</div>
        </div>`)}
      </div>
      <div class="qat">${this.qat()}</div>
      <div class="opts"></div>
      <div class="gapline"></div>
      <div class="main">
        <div class="browser">
          <div class="bhead"><span>Project Browser - Bookcase_Base Plate</span>${closeIc}</div>
          <div class="tree">
            ${treeSvg()}
            ${TREE.map(([l, t], i) => html`<div class="row l${l} ${i === 2 ? "hi" : ""} ${i === 7 ? "b" : ""}"><span>${t}</span></div>`)}
          </div>
          <div class="btabs"><div>Properties</div><div class="on">Project Browser - Bookcase_Base Plate</div></div>
        </div>
        <div class="cen">
          <div class="pane">
            <div class="vhead"><div class="vtab">${ic(svg`<path d="M1 1H15V15H1zM1 6H6V1M6 15V10H10" fill="#f5f5f5" stroke="#999"/>`, 16, 16)}<span>Ref. Level</span></div><div class="vmenu">${menuIc}</div></div>
            <div class="vbody"><div class="canvas">${planSvg}${navBar("a", false)}</div>${vscroll(89)}</div>
            ${viewStatus(`1/2" = 1'-0"`, [V.paper, V.cube, V.sun, V.shadow, V.link, V.crop, V.hide], 129)}
          </div>
          <div class="pane">
            <div class="vhead short"><div class="vtab">${ic(svg`<path d="M8 1L15 7H12V15H4V7H1z" fill="#c8c8c8" stroke="#8a8a8a"/>`, 16, 16)}<span>Front</span></div><div class="vmenu">${menuIc}</div></div>
            <div class="vbody"><div class="canvas">${elevSvg}${navBar("a", false)}</div>${vscroll(89)}</div>
            ${viewStatus(`1/2" = 1'-0"`, [V.paper, V.cube, V.sun, V.shadow, V.link, V.crop, V.hide], 129)}
          </div>
        </div>
        <div class="right">
          <div class="pane">
            <div class="vhead"><div class="vtab act">${ic(svg`<path d="M2 4L7 1L12 4V12L7 15L2 12z" fill="#eee" stroke="#4a5a66"/><path d="M2 4L7 7L12 4M7 7V15" fill="none" stroke="#4a5a66"/><path d="M4 3L7 1L10 3L7 5z" fill="#556"/>`, 14, 16)}<b style="margin-left:4px">{3D}</b>${closeIc}</div><div class="vmenu" style="margin-right:0">${menuIc}</div></div>
            <div class="vbody"><div class="canvas">${modelSvg}${navBar("b", true)}</div>${vscroll(214)}</div>
            ${viewStatus(`1/8" = 1'-0"`, [V.hatch, V.cube, V.sun, V.shadow, V.house, V.link, V.crop, V.hide], 120)}
          </div>
        </div>
      </div>
      <div class="status">
        <span>Click to select, TAB for alternates, CTRL adds, SHIFT unselects.</span>
        <div class="sicons">
          <span class="si">${ic(svg`<path d="M1 3h5v3H1zM8 3h5v3H8z" fill="#e8b93a" stroke="#8d6f1a"/><path d="M6 6L8 15L10 11L13 13" fill="#fff" stroke="#333"/>`, 14, 16)}</span>
          <span class="si">${ic(svg`<path d="M1 10L8 3H14V11H1z" fill="#e6eff6" stroke="#4a7ca5" stroke-dasharray="2 1"/><path d="M9 8l5 5" stroke="#333"/>`, 15, 15)}</span>
          <span class="si">${ic(svg`<rect x="2" y="2" width="9" height="3" fill="#e79a2c"/><rect x="5" y="5" width="3" height="8" fill="#d9822b"/><path d="M10 9l4 5" stroke="#444"/>`, 15, 15)}</span>
          <span class="si">${ic(svg`<path d="M2 3L7 1V13H2z" fill="#bcd8ec" stroke="#2f7db5"/><path d="M7 5H11V13H7" fill="none" stroke="#2f7db5"/><path d="M11 10l3 3" stroke="#444"/>`, 15, 15)}</span>
          <span class="si">${ic(svg`<path d="M3 3v4M1 5h4" stroke="#444"/><path d="M6 5L12 10L9 11L11 14" fill="#fff" stroke="#555"/>`, 15, 15)}</span>
          <span class="si">${ic(svg`<circle cx="7.500" cy="7.500" r="4.500" fill="none" stroke="#aaa" stroke-width="2.500"/>`, 15, 15)}</span>
          <span class="si">${ic(svg`<path d="M1 2H13L8.500 8V14L5.500 12V8z" fill="#e8f2f8" stroke="#4a7ca5"/>`, 14, 15)}</span>
          <span class="z">:0</span>
        </div>
      </div>
    `;
  }
}
